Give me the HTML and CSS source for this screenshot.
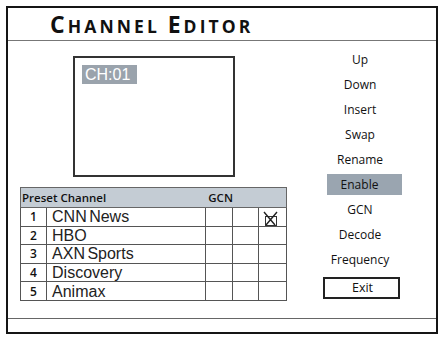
FILE: index.html
```html
<!DOCTYPE html>
<html lang="en">
<head>
    <meta charset="UTF-8">
    <title>Channel Editor</title>
    <link rel="stylesheet" href="styles.css">
</head>
<body>
    <div class="frame">
        <div class="header">
            <h1><span class="cap">C</span>hannel <span class="cap">E</span>ditor</h1>
        </div>
        <div class="main">
            <div class="left">
                <div class="preview">
                    <span class="ch-label">CH:01</span>
                </div>
                <table class="channels">
                    <thead>
                        <tr><th colspan="2">Preset Channel</th><th colspan="3">GCN</th></tr>
                    </thead>
                    <tbody>
                        <tr><td class="num">1</td><td class="name">CNN News</td><td></td><td></td><td class="chk">
                            <svg width="15" height="15" viewBox="0 0 15 15"><rect x="2.5" y="5.5" width="11" height="9" fill="none" stroke="#333"/><path d="M1 1 L12 14 M14 1 L3 14" stroke="#222" stroke-width="1.4"/></svg>
                        </td></tr>
                        <tr><td class="num">2</td><td class="name">HBO</td><td></td><td></td><td></td></tr>
                        <tr><td class="num">3</td><td class="name">AXN Sports</td><td></td><td></td><td></td></tr>
                        <tr><td class="num">4</td><td class="name">Discovery</td><td></td><td></td><td></td></tr>
                        <tr><td class="num">5</td><td class="name">Animax</td><td></td><td></td><td></td></tr>
                    </tbody>
                </table>
            </div>
            <ul class="menu">
                <li>Up</li>
                <li>Down</li>
                <li>Insert</li>
                <li>Swap</li>
                <li>Rename</li>
                <li class="selected">Enable</li>
                <li>GCN</li>
                <li>Decode</li>
                <li>Frequency</li>
                <li class="exit">Exit</li>
            </ul>
        </div>
        <div class="status"></div>
    </div>
</body>
</html>
```

FILE: styles.css
```css
body { margin: 0; background: #fff; font-family: 'Open Sans', 'DejaVu Sans', sans-serif; color: #111; }
.frame { margin: 6px; width: 432px; height: 328px; border: 2px solid #151515; box-sizing: border-box; display: flex; flex-direction: column; }
.header { height: 33px; border-bottom: 1px solid #777; box-sizing: border-box; padding-left: 42px; }
.header h1 { margin: 0; font-size: 17.5px; line-height: 33px; font-weight: 700; text-transform: uppercase; letter-spacing: 3.1px; color: #111; }
.header h1 .cap { font-size: 23px; }
.main { flex: 1; display: flex; }
.left { width: 290px; padding-left: 12px; }
.preview { margin: 15px 0 0 53px; width: 162px; height: 121px; border: 2px solid #333; box-sizing: border-box; padding: 5px 0 0 7px; }
.ch-label { display: inline-block; background: #9aa3ac; color: #fff; font-family: 'Liberation Sans', Arial, sans-serif; font-size: 16px; line-height: 19px; padding: 0 7px 0 3px; }
.channels { margin-top: 10px; border-collapse: collapse; width: 267px; }
.channels th { background: #c4ccd4; font-size: 11.5px; font-weight: 600; text-align: left; height: 19px; padding: 0 0 0 1px; border: 1px solid #666; }
.channels th + th { padding-left: 3px; border-left: none; }
.channels th:first-child { border-right: none; }
.channels td { border: 1px solid #555; height: 17.6px; padding: 0; width: 27px; }
.channels td.num { width: 26px; text-align: center; font-size: 12px; font-weight: 600; }
.channels td.name { width: 157px; font-family: 'Liberation Sans', Arial, sans-serif; font-size: 16px; line-height: 17px; color: #222; padding-left: 5px; word-spacing: -2px; }
.channels td.chk { text-align: center; vertical-align: bottom; }
.channels td.chk svg { display: block; margin: 0 auto 0 4px; }
.menu { list-style: none; margin: 0; padding: 8px 0 0 10px; display: flex; flex-direction: column; gap: 4px; width: 80px; }
.menu li { height: 21px; line-height: 21px; text-align: center; font-size: 12px; font-weight: 500; color: #111; }
.menu li.selected { background: #9aa5b0; width: 75px; margin-left: 7px; padding-right: 10px; box-sizing: border-box; }
.menu li.exit { margin-top: 3px; width: 77px; height: 22px; margin-left: 3px; border: 2px solid #222; box-sizing: border-box; line-height: 18px; font-size: 12.5px; padding-left: 2px; }
.status { height: 13px; border-top: 1px solid #666; }
```
